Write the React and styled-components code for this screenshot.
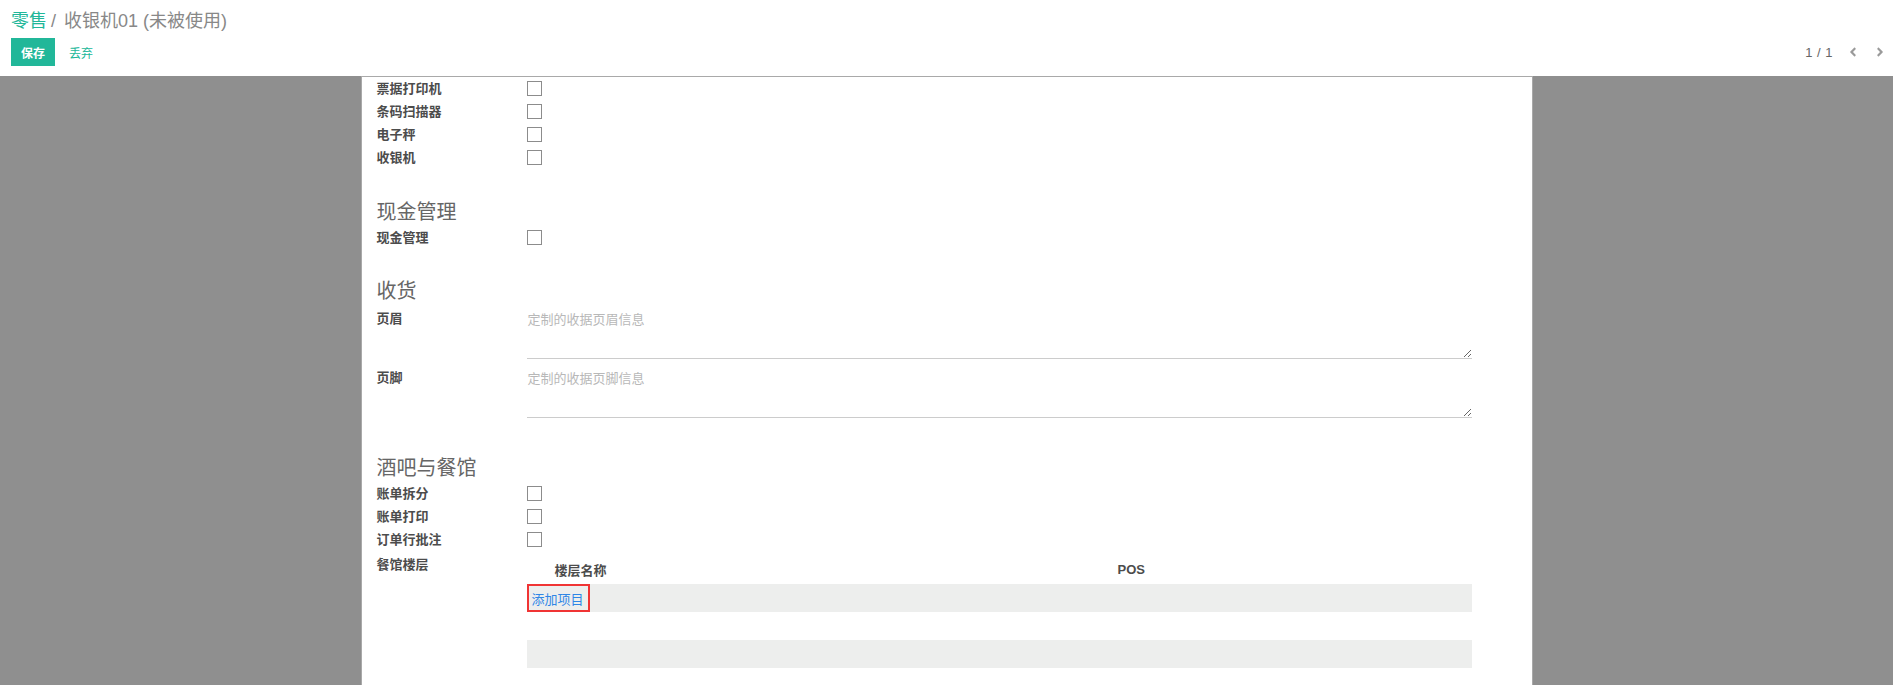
import React from 'react';
import styled, { createGlobalStyle } from 'styled-components';
import { FaAngleLeft, FaAngleRight } from 'react-icons/fa';

const GlobalStyle = createGlobalStyle`
  html, body {
    margin: 0;
    padding: 0;
    height: 100%;
    overflow: hidden;
    font-family: "Liberation Sans", "Noto Sans CJK SC", sans-serif;
  }
  #root {
    height: 100%;
  }
`;

const Page = styled.div`
  display: flex;
  flex-direction: column;
  height: 100vh;
`;

const ControlPanel = styled.div`
  background: #fff;
  height: 76px;
  box-sizing: border-box;
  padding: 8px 0 10px 11px;
`;

const Breadcrumb = styled.div`
  font-size: 18px;
  line-height: 26px;
  color: #888;
  white-space: nowrap;
`;

const Crumb = styled.a`
  color: #21b799;
  text-decoration: none;
`;

const Sep = styled.span`
  margin: 0 8px 0 4px;
`;

const ButtonRow = styled.div`
  display: flex;
  align-items: center;
  justify-content: space-between;
  margin-top: 4px;
`;

const Buttons = styled.div`
  display: flex;
  align-items: center;
  gap: 14px;
`;

const PrimaryButton = styled.button`
  height: 28px;
  width: 44px;
  border: none;
  background: #21b799;
  color: #fff;
  font-weight: bold;
  font-size: 12px;
  font-family: inherit;
  padding: 0;
`;

const LinkButton = styled.a`
  color: #21b799;
  font-size: 12px;
  text-decoration: none;
`;

const Pager = styled.div`
  display: flex;
  align-items: center;
  color: #666;
  font-size: 13px;
`;

const PagerValue = styled.span`
  margin-right: 6px;
  letter-spacing: 0.5px;
`;

const PagerButton = styled.span`
  width: 27px;
  display: flex;
  justify-content: center;
  color: #9a9a9a;
`;

const Main = styled.div`
  flex: 1;
  background: #8f8f8f;
  overflow: hidden;
`;

const Sheet = styled.div`
  width: 1172px;
  box-sizing: border-box;
  height: 100%;
  margin: 0 auto;
  background: #fff;
  border: 1px solid #a9a9a9;
  border-bottom: none;
  padding: 0 60px 0 15px;
`;

const Row = styled.div`
  display: flex;
  align-items: ${p => (p.$top ? 'flex-start' : 'center')};
  min-height: 23px;
`;

const Label = styled.div`
  width: 150px;
  flex-shrink: 0;
  font-size: 13px;
  font-weight: bold;
  color: #4c4c4c;
  line-height: ${p => (p.$tall ? '20px' : '23px')};
  padding-top: ${p => (p.$tall ? '4px' : '0')};
`;

const Check = styled.input.attrs({ type: 'checkbox' })`
  appearance: none;
  margin: 0;
  width: 15px;
  height: 15px;
  border: 1px solid #8c8c8c;
  box-sizing: border-box;
  background: #fff;
`;

const SectionTitle = styled.div`
  font-size: 20px;
  line-height: 28px;
  color: #666;
  margin-top: ${p => p.$gap}px;
`;

const TextField = styled.textarea`
  flex: 1;
  height: 50px;
  box-sizing: border-box;
  margin: 4px 0 5px;
  border: none;
  border-bottom: 1px solid #cccccc;
  padding: 2px 1px;
  font-size: 13px;
  line-height: 18px;
  font-family: inherit;
  outline: none;
  &::placeholder {
    color: #b8b8b8;
  }
`;

const Table = styled.div`
  flex: 1;
`;

const TableHead = styled.div`
  display: grid;
  grid-template-columns: 563px 1fr;
  padding-left: 28px;
  height: 33px;
  align-items: center;
  padding-top: 3px;
  box-sizing: border-box;
  font-size: 13px;
  font-weight: bold;
  color: #4c4c4c;
`;

const TableRow = styled.div`
  height: 28px;
  background: ${p => (p.$shade ? '#edeeed' : '#fff')};
  display: flex;
  align-items: stretch;
`;

const AddLine = styled.a`
  display: flex;
  align-items: center;
  box-sizing: border-box;
  border: 2px solid #f03434;
  padding: 0 4px 0 3px;
  color: #2f86e6;
  font-size: 13px;
  text-decoration: none;
`;

const checks1 = ['票据打印机', '条码扫描器', '电子秤', '收银机'];
const checks2 = ['账单拆分', '账单打印', '订单行批注'];

export default function App() {
  return (
    <Page>
      <GlobalStyle />
      <ControlPanel>
        <Breadcrumb>
          <Crumb>零售</Crumb>
          <Sep>/</Sep>
          收银机01 (未被使用)
        </Breadcrumb>
        <ButtonRow>
          <Buttons>
            <PrimaryButton>保存</PrimaryButton>
            <LinkButton>丢弃</LinkButton>
          </Buttons>
          <Pager>
            <PagerValue>1 / 1</PagerValue>
            <PagerButton><FaAngleLeft size={14} /></PagerButton>
            <PagerButton><FaAngleRight size={14} /></PagerButton>
          </Pager>
        </ButtonRow>
      </ControlPanel>
      <Main>
        <Sheet>
          {checks1.map(c => (
            <Row key={c}>
              <Label>{c}</Label>
              <Check />
            </Row>
          ))}

          <SectionTitle $gap={29}>现金管理</SectionTitle>
          <Row>
            <Label>现金管理</Label>
            <Check />
          </Row>

          <SectionTitle $gap={28}>收货</SectionTitle>
          <Row $top>
            <Label $tall>页眉</Label>
            <TextField placeholder="定制的收据页眉信息" />
          </Row>
          <Row $top>
            <Label $tall>页脚</Label>
            <TextField placeholder="定制的收据页脚信息" />
          </Row>

          <SectionTitle $gap={31}>酒吧与餐馆</SectionTitle>
          {checks2.map(c => (
            <Row key={c}>
              <Label>{c}</Label>
              <Check />
            </Row>
          ))}
          <Row $top>
            <Label $tall>餐馆楼层</Label>
            <Table>
              <TableHead>
                <span>楼层名称</span>
                <span>POS</span>
              </TableHead>
              <TableRow $shade>
                <AddLine>添加项目</AddLine>
              </TableRow>
              <TableRow />
              <TableRow $shade />
            </Table>
          </Row>
        </Sheet>
      </Main>
    </Page>
  );
}
